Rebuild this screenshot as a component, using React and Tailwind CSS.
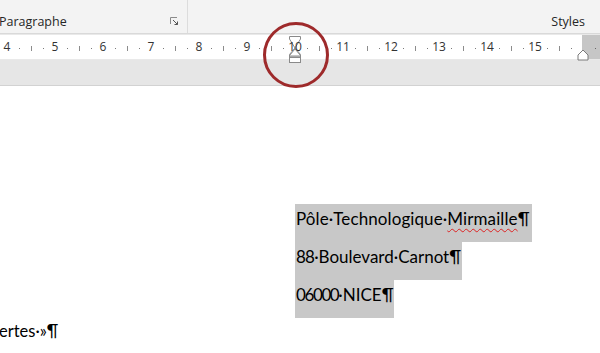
import React from "react";

const nums = [4, 5, 6, 7, 8, 9, 10, 11, 12, 13, 14, 15];

function Cell({ n }) {
  return (
    <div className="relative w-[48px] h-full shrink-0">
      <div className="absolute left-0 top-[11px] w-px h-[5px] bg-[#8c8c8c]" />
      <div className="absolute left-[12px] top-[13px] w-px h-px bg-[#7a7a7a]" />
      <span className="absolute z-10 left-[24px] -translate-x-1/2 top-[3px] text-[12px] leading-[18px] text-[#333] font-['Open_Sans',sans-serif]">
        {n}
      </span>
      <div className="absolute left-[36px] top-[13px] w-px h-px bg-[#7a7a7a]" />
    </div>
  );
}

export default function App() {
  return (
    <div className="w-[600px] h-[353px] overflow-hidden bg-white relative font-['Open_Sans',sans-serif]">
      {/* Ribbon */}
      <div className="h-[34px] bg-[#f3f3f3] border-b border-[#d9d9d9] flex">
        <div className="w-[188px] border-r border-[#dcdcdc] flex items-end justify-between pb-[2px] h-[33px]">
          <span className="text-[12.5px] leading-[18px] text-[#262626] -ml-[1px]">Paragraphe</span>
          <svg width="9" height="9" viewBox="0 0 9 9" className="mr-[8px] mb-[5px]">
            <path d="M0.5 7V0.5H7" fill="none" stroke="#8a8a8a" strokeWidth="1" />
            <path d="M3 3L7.5 7.5M7.5 4.5V7.5H4.5" fill="none" stroke="#555" strokeWidth="1" />
          </svg>
        </div>
        <div className="flex-1 flex items-end justify-end pb-[2px] pr-[15px] h-[33px]">
          <span className="text-[12.5px] leading-[18px] text-[#262626]">Styles</span>
        </div>
      </div>
      {/* Ruler */}
      <div className="h-[26px] bg-[#e9e9e9] pt-[1px] relative">
        <div className="h-[24px] flex">
          <div className="w-[582px] bg-white overflow-hidden flex h-full relative">
            <svg className="absolute left-[288px] top-[1px]" width="14" height="29" viewBox="0 0 14 29">
              <path d="M1.5 0.5H12.5V3L7 12L1.5 3Z" fill="white" stroke="#8a8a8a" />
              <path d="M7 13L12.5 19.5V21H1.5V19.5Z" fill="white" stroke="#8a8a8a" />
            </svg>
            <div className="flex h-full -ml-[17px]">
              {nums.map((n) => (
                <Cell key={n} n={n} />
              ))}
              <div className="relative w-[48px] h-full shrink-0">
                <div className="absolute left-0 top-[11px] w-px h-[5px] bg-[#8c8c8c]" />
                <div className="absolute left-[12px] top-[13px] w-px h-px bg-[#7a7a7a]" />
              </div>
            </div>
          </div>
          <div className="flex-1 bg-[#c6c6c6] relative">
            <div className="absolute left-[13px] top-[13px] w-px h-px bg-[#666]" />
          </div>
        </div>
        {/* left indent box */}
        <svg className="absolute left-[288px] top-[1px]" width="14" height="29" viewBox="0 0 14 29">
          <path d="M7 13L12.5 19.5V21H1.5V19.5Z" fill="none" stroke="#8a8a8a" />
          <rect x="1.5" y="22.5" width="11" height="5" fill="white" stroke="#8a8a8a" />
        </svg>
        <svg className="absolute left-[577px] top-[15px]" width="12" height="12" viewBox="0 0 12 12">
          <path d="M6 1L11 6V11H1V6Z" fill="white" stroke="#7a7a7a" />
        </svg>
      </div>
      <div className="h-[26px] bg-[#e6e6e6] border-b border-[#d2d2d2]" />
      {/* Red circle annotation */}
      <div className="absolute left-[263px] top-[22px] w-[66px] h-[66px] rounded-full border-[3px] border-[#9e2a2b]" />
      {/* Document */}
      <div className="pt-[118px] font-['Lato',sans-serif] text-[17px] text-black">
        <div className="pl-[295px] flex flex-col items-start">
          <div className="bg-[#c8c8c8] h-[38px] pt-[4px] pr-[2px] pl-[1px] leading-[22px] tracking-[0.1px]">
            Pôle·Technologique·
            <span className="underline decoration-wavy decoration-[#d22] decoration-1 underline-offset-[3px]">Mirmaille</span>¶
          </div>
          <div className="bg-[#c8c8c8] h-[38px] pt-[4px] pr-[1px] pl-[1px] leading-[22px]">
            <span className="tracking-[-0.8px]">88</span>·Boulevard·Carnot¶
          </div>
          <div className="bg-[#c8c8c8] h-[38px] pt-[4px] pr-0 pl-[1px] leading-[22px]">
            <span className="tracking-[-1.4px]">06000</span>·NICE¶
          </div>
        </div>
        <div className="pt-[2px] leading-[22px] -ml-[1px] text-[16.5px]">ertes·»¶</div>
      </div>
    </div>
  );
}
